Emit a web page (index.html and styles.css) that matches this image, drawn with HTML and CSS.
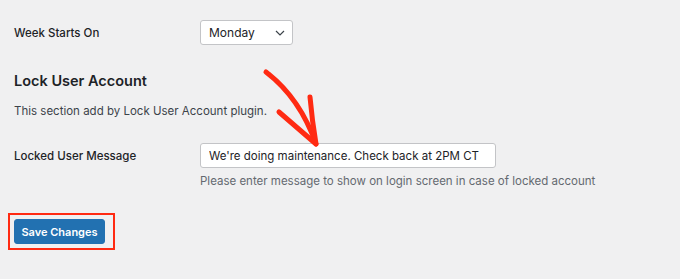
FILE: index.html
```html
<!DOCTYPE html>
<html lang="en">
	<head>
		<meta charset="UTF-8" />
		<meta name="viewport" content="width=device-width, initial-scale=1.0" />
		<title>Settings</title>
		<link rel="stylesheet" href="styles.css">
	</head>
	<body>
		<div class="wrap">
			<div class="row row-week">
				<label class="label" for="week">Week Starts On</label>
				<div class="select">
					<span>Monday</span>
					<svg class="chevron" width="10" height="6" viewBox="0 0 10 6"><path d="M1 1 L5 5 L9 1" fill="none" stroke="#3c434a" stroke-width="1.2"/></svg>
				</div>
			</div>
			<h2 class="section-title">Lock User Account</h2>
			<p class="section-desc">This section add by Lock User Account plugin.</p>
			<div class="row row-message">
				<label class="label" for="msg">Locked User Message</label>
				<div class="field">
					<input id="msg" class="text-input" type="text" value="We're doing maintenance. Check back at 2PM CT" />
					<p class="description">Please enter message to show on login screen in case of locked account</p>
				</div>
			</div>
			<div class="submit">
				<div class="highlight">
					<button class="button-primary" type="submit">Save Changes</button>
				</div>
			</div>
			<svg class="arrow" width="80" height="100" viewBox="250 60 80 100">
				<path d="M266 72 Q300 98 316 144" fill="none" stroke="#ff2a12" stroke-width="5" stroke-linecap="round"/>
				<path d="M279 112 L316 144 Q312 120 310 97" fill="none" stroke="#ff2a12" stroke-width="5" stroke-linecap="round" stroke-linejoin="round"/>
			</svg>
		</div>
	</body>
</html>
```

FILE: styles.css
```css
body {
	margin: 0;
	background: #f0f0f1;
	font-family: Inter, "Noto Sans", sans-serif;
	font-size: 11.5px;
	color: #1d2327;
}
.wrap {
	position: relative;
	padding: 20px 0 0 14px;
	height: 259px;
}
.row {
	display: flex;
}
.row-week {
	align-items: center;
}
.label {
	width: 186px;
	font-weight: 500;
	flex-shrink: 0;
}
.select {
	width: 93px;
	height: 25px;
	box-sizing: border-box;
	border: 1px solid #c3c4c7;
	border-radius: 3px;
	background: #fff;
	display: flex;
	align-items: center;
	justify-content: space-between;
	padding: 0 7px 0 8px;
	font-size: 12px;
}
.section-title {
	font-size: 14.5px;
	font-weight: 600;
	margin: 27px 0 0;
}
.section-desc {
	margin: 15px 0 0;
	color: #3c434a;
}
.row-message {
	margin-top: 25px;
}
.row-message .label {
	padding-top: 6px;
}
.text-input {
	display: block;
	width: 296px;
	height: 25px;
	box-sizing: border-box;
	border: 1px solid #c3c4c7;
	border-radius: 3px;
	background: #fff;
	padding: 0 8px;
	font-family: inherit;
	font-size: 11.5px;
	color: #1d2327;
}
.description {
	margin: 6px 0 0;
	color: #646970;
}
.submit {
	margin-top: 25px;
	margin-left: -6px;
}
.highlight {
	display: inline-block;
	border: 2px solid #ff2a12;
	padding: 4px 8px 4px 4px;
}
.button-primary {
	display: block;
	width: 91px;
	height: 25px;
	border: 1px solid #2271b1;
	border-radius: 3px;
	background: #2271b1;
	color: #fff;
	font-family: inherit;
	font-size: 11px;
	font-weight: 600;
	padding: 0;
}
.arrow {
	position: absolute;
	left: 250px;
	top: 60px;
}
```
